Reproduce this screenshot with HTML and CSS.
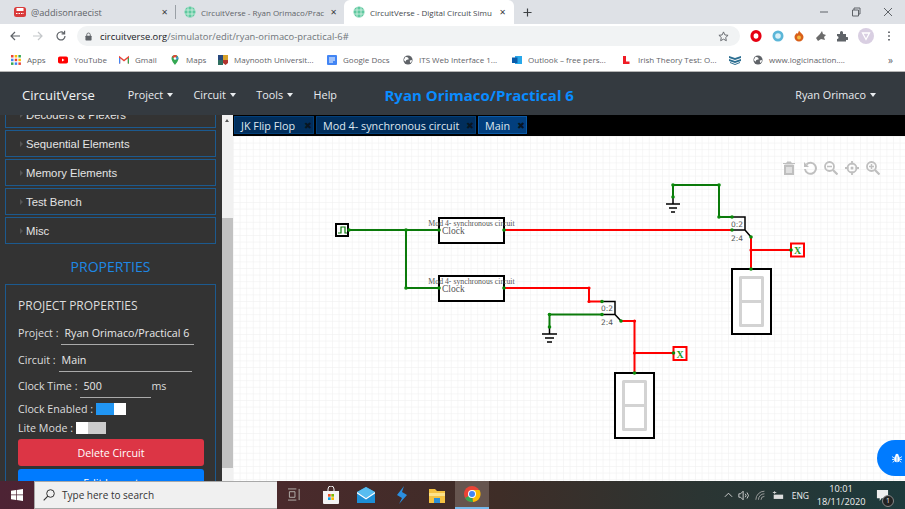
FILE: index.html
```html
<!DOCTYPE html>
<html lang="en">
<head>
    <meta charset="UTF-8">
    <meta name="viewport" content="width=device-width, initial-scale=1.0">
    <title>CircuitVerse - Digital Circuit Simulator</title>
    <link rel="stylesheet" href="styles.css">
</head>
<body>
    <svg class="defs" width="0" height="0">
        <symbol id="cv-globe" viewBox="0 0 12 12">
            <circle cx="6" cy="6" r="5.5" fill="#5fc9a0"/>
            <path d="M0.5 4h11M0.5 8h11M4 .8v10.4M8 .8v10.4" stroke="#d8f3e6" stroke-width=".8" fill="none"/>
        </symbol>
        <symbol id="earth" viewBox="0 0 12 12">
            <circle cx="6" cy="6" r="5.5" fill="#5f6368"/>
            <path d="M3 2l3 1 1 2-3 1-1 2-2-2zM8 7l2-1 1 1-2 3z" fill="#fff"/>
        </symbol>
    </svg>

    <!-- browser tabs -->
    <div class="tabstrip">
        <div class="tab tab-first">
            <svg class="favicon" viewBox="0 0 12 12"><rect x="0" y="1" width="12" height="10" rx="2.5" fill="#d93b3b"/><rect x="2.5" y="2" width="7" height="3" fill="#fff"/><path d="M2 7.5h8" stroke="#fff" stroke-dasharray="1.5 1"/></svg>
            <span class="tab-title">@addisonraecist</span>
            <span class="tab-x">✕</span>
        </div>
        <div class="tab tab-second">
            <svg class="favicon"><use href="#cv-globe"/></svg>
            <span class="tab-title">CircuitVerse - Ryan Orimaco/Prac</span>
            <span class="tab-x">✕</span>
        </div>
        <div class="tab tab-active">
            <svg class="favicon"><use href="#cv-globe"/></svg>
            <span class="tab-title">CircuitVerse - Digital Circuit Simu</span>
            <span class="tab-x">✕</span>
        </div>
        <svg class="new-tab" viewBox="0 0 10 10"><path d="M5 .5v9M.5 5h9" stroke="#3c4043" stroke-width="1.3"/></svg>
        <div class="win-controls">
            <svg viewBox="0 0 10 10"><path d="M1 5h8" stroke="#5f6368"/></svg>
            <svg viewBox="0 0 10 10"><path d="M1.5 3h6v6h-6zM3 3V1h6v6H7.5" stroke="#5f6368" fill="none"/></svg>
            <svg viewBox="0 0 10 10"><path d="M1 1l8 8M9 1l-8 8" stroke="#5f6368"/></svg>
        </div>
    </div>

    <!-- address bar -->
    <div class="toolbar">
        <svg class="nav-icon" viewBox="0 0 12 12"><path d="M11 6H2M6 2L2 6l4 4" stroke="#5f6368" stroke-width="1.2" fill="none"/></svg>
        <svg class="nav-icon" viewBox="0 0 12 12"><path d="M1 6h9M6 2l4 4-4 4" stroke="#c4c7ca" stroke-width="1.2" fill="none"/></svg>
        <svg class="nav-icon" viewBox="0 0 12 12"><path d="M10 6a4 4 0 1 1-1.2-2.9M9.6 .8v3h-3" stroke="#5f6368" stroke-width="1.2" fill="none"/></svg>
        <div class="omnibox">
            <svg class="lock" viewBox="0 0 8 10"><rect x="0.5" y="4" width="7" height="5.5" rx=".8" fill="#5f6368"/><path d="M2 4.5V3a2 2 0 0 1 4 0v1.5" stroke="#5f6368" fill="none"/></svg>
            <span class="url"><b>circuitverse.org</b>/simulator/edit/ryan-orimaco-practical-6#</span>
            <svg class="star" viewBox="0 0 12 12"><path d="M6 1l1.5 3.3 3.5.4-2.6 2.4.7 3.5L6 8.9l-3.1 1.7.7-3.5L1 4.7l3.5-.4z" stroke="#5f6368" fill="none"/></svg>
        </div>
        <div class="extensions">
            <svg viewBox="0 0 12 12"><ellipse cx="6" cy="6" rx="4" ry="4.4" fill="none" stroke="#e60012" stroke-width="3.2"/></svg>
            <svg viewBox="0 0 12 12"><circle cx="6" cy="6" r="5.5" fill="#5bb6d8"/><circle cx="6" cy="6" r="2.8" fill="#d9f0f7"/></svg>
            <svg viewBox="0 0 12 12"><path d="M6 .5c1 2 4.500 3.500 4.500 6.500a4.500 4.500 0 0 1-9 0C1.500 5 3 4 3.500 3 4 4 5 4 6 .5z" fill="#d9601a"/><circle cx="6" cy="7.500" r="2" fill="#f5b942"/></svg>
            <svg viewBox="0 0 12 12"><path d="M1 8l4-4 2-3 1 3 3 1-2 2 1 3-4-1-3 2z" fill="#6b6b6b"/></svg>
            <svg viewBox="0 0 12 12"><path d="M1 4h3V2.500a1.500 1.500 0 0 1 3 0V4h3v3h1a1.500 1.500 0 0 1 0 3h-1v1.500H1V9a1.500 1.500 0 0 0 0-3z" fill="#5f6368"/></svg>
            <svg class="avatar" viewBox="0 0 16 16"><circle cx="8" cy="8" r="8" fill="#d9cfe2"/><path d="M4.500 5h7L8 11.500z" fill="none" stroke="#fff" stroke-width="1.300"/></svg>
            <svg viewBox="0 0 12 12"><path d="M6 1.500v1.500M6 5.300v1.500M6 9v1.500" stroke="#5f6368" stroke-width="1.800"/></svg>
        </div>
    </div>

    <!-- bookmarks -->
    <div class="bookmarks">
        <a class="bm bm-apps"><svg viewBox="0 0 10 10"><path d="M0 0h2.500v2.500H0z" fill="#ea4335"/><path d="M3.700 0h2.500v2.500H3.700z" fill="#fbbc05"/><path d="M7.400 0h2.500v2.500H7.400z" fill="#34a853"/><path d="M0 3.700h2.500v2.500H0z" fill="#4285f4"/><path d="M3.700 3.700h2.500v2.500H3.700z" fill="#ea4335"/><path d="M7.400 3.700h2.500v2.500H7.400z" fill="#fbbc05"/><path d="M0 7.400h2.500v2.500H0z" fill="#34a853"/><path d="M3.700 7.400h2.500v2.500H3.700z" fill="#4285f4"/><path d="M7.400 7.400h2.500v2.500H7.400z" fill="#ea4335"/></svg>Apps</a>
        <a class="bm bm-yt"><svg viewBox="0 0 10 10"><rect y="1.500" width="10" height="7" rx="1.800" fill="#f00"/><path d="M4 3.500l2.500 1.500L4 6.500z" fill="#fff"/></svg>YouTube</a>
        <a class="bm bm-gmail"><svg viewBox="0 0 10 10"><path d="M.5 8.500V2L5 5.500 9.500 2v6.500" fill="none" stroke="#ea4335" stroke-width="1.400"/><path d="M.5 8.500V3" stroke="#4285f4" stroke-width="1.400"/><path d="M9.500 8.500V3" stroke="#34a853" stroke-width="1.400"/></svg>Gmail</a>
        <a class="bm bm-maps"><svg viewBox="0 0 10 10"><path d="M5 0a3.500 3.500 0 0 1 3.500 3.500C8.500 6 5 10 5 10S1.500 6 1.500 3.500A3.500 3.500 0 0 1 5 0z" fill="#34a853"/><path d="M2 2a3.500 3.500 0 0 1 5-1.500L5 3.500z" fill="#ea4335"/><path d="M8.500 3.500L6 5 7 1z" fill="#4285f4"/><circle cx="5" cy="3.500" r="1.300" fill="#fff"/></svg>Maps</a>
        <a class="bm bm-mu"><svg viewBox="0 0 10 10"><path d="M0 0h5v5H0z" fill="#27477d"/><path d="M5 0h5v5H5z" fill="#d7a12a"/><path d="M0 5h5v5H0z" fill="#2f6f60"/><path d="M5 5h5v3L7.500 10 5 8z" fill="#b2342e"/></svg>Maynooth Universit...</a>
        <a class="bm bm-docs"><svg viewBox="0 0 10 10"><rect x="0" width="10" height="10" rx="1" fill="#4285f4"/><path d="M2 3h6M2 5h6M2 7h4" stroke="#fff"/></svg>Google Docs</a>
        <a class="bm bm-its"><svg><use href="#earth"/></svg>ITS Web Interface 1...</a>
        <a class="bm bm-outlook"><svg viewBox="0 0 10 10"><rect x="3" y="1" width="7" height="8" fill="#28a8ea"/><rect y="2.500" width="5.500" height="5.500" fill="#0a5aa8"/></svg>Outlook – free pers...</a>
        <a class="bm bm-l"><svg viewBox="0 0 10 10"><path d="M0 1h3v5.500h3.500V9H0z" fill="#ef1c25"/></svg>Irish Theory Test: O...</a>
        <a class="bm bm-stack"><svg viewBox="0 0 12 10"><path d="M0 1l6 2 6-2v2L6 5 0 3zM0 4l6 2 6-2v2L6 8 0 6zM1 7l5 2 5-2v1l-5 2-5-2z" fill="#2c6e91"/></svg></a>
        <a class="bm bm-www"><svg><use href="#earth"/></svg>www.logicinaction....</a>
        <span class="bm-more">»</span>
    </div>

    <!-- simulator navbar -->
    <nav class="navbar">
        <span class="brand">CircuitVerse</span>
        <span class="nav-link">Project<i class="caret"></i></span>
        <span class="nav-link">Circuit<i class="caret"></i></span>
        <span class="nav-link">Tools<i class="caret"></i></span>
        <span class="nav-link">Help</span>
        <span class="project-title">Ryan Orimaco/Practical 6</span>
        <span class="nav-link nav-user">Ryan Orimaco<i class="caret"></i></span>
    </nav>

    <div class="workspace">
        <aside class="sidebar">
            <div class="sidebar-inner">
                <div class="acc-item"><i class="acc-arrow"></i>Decoders &amp; Plexers</div>
                <div class="acc-item"><i class="acc-arrow"></i>Sequential Elements</div>
                <div class="acc-item"><i class="acc-arrow"></i>Memory Elements</div>
                <div class="acc-item"><i class="acc-arrow"></i>Test Bench</div>
                <div class="acc-item"><i class="acc-arrow"></i>Misc</div>
                <h3 class="props-heading">PROPERTIES</h3>
                <div class="props-box">
                    <div class="props-title">PROJECT PROPERTIES</div>
                    <div class="prop-row">Project :<span class="prop-input prop-long">Ryan Orimaco/Practical 6</span></div>
                    <div class="prop-row">Circuit :<span class="prop-input prop-long">Main</span></div>
                    <div class="prop-row">Clock Time :<span class="prop-input prop-clock">500</span>ms</div>
                    <div class="switch-row">Clock Enabled :<span class="switch switch-on"><i></i></span></div>
                    <div class="switch-row switch-row-lite">Lite Mode :<span class="switch switch-off"><i></i></span></div>
                    <button class="btn btn-danger">Delete Circuit</button>
                    <button class="btn btn-primary">Edit Layout</button>
                </div>
            </div>
        </aside>
        <div class="scrollbar">
            <i class="scroll-up"></i>
            <i class="scroll-thumb"></i>
        </div>
        <main class="stage">
            <div class="circuit-tabs">
                <div class="ctab">JK Flip Flop<span class="ctab-x">✖</span></div>
                <div class="ctab">Mod 4- synchronous circuit<span class="ctab-x">✖</span></div>
                <div class="ctab ctab-current">Main<span class="ctab-x">✖</span></div>
            </div>
            <div class="canvas">
                <svg class="circuit" viewBox="233 136 672 345" width="672" height="345">
                    <defs>
                        <pattern id="grid" x="233" y="136" width="6.6" height="6.6" patternUnits="userSpaceOnUse">
                            <path d="M6.600 0H0V6.600" fill="none" stroke="#eee" stroke-width="1"/>
                        </pattern>
                    </defs>
                    <rect x="233" y="136" width="672" height="345" fill="url(#grid)"/>

                    <!-- green wires -->
                    <path class="wire wire-low" d="M349 230H439M406 230V288H439"/>
                    <path class="wire wire-low" d="M673 197V185H719V217H732"/>
                    <path class="wire wire-low" d="M602 314.500H549.500V327"/>

                    <!-- red wires -->
                    <path class="wire wire-high" d="M504 230H732"/>
                    <path class="wire wire-high" d="M504 288H589V301.500H602"/>
                    <path class="wire wire-high" d="M751 237V269M751 250H790"/>
                    <path class="wire wire-high" d="M621 321H634.500V373M634.500 353H673"/>

                    <!-- clock -->
                    <rect class="block" x="336" y="224" width="12" height="12"/>
                    <path class="clock-wave" d="M338 233H341V227H345V233H347"/>

                    <!-- subcircuits -->
                    <rect class="block block-fill" x="439" y="218" width="65" height="25"/>
                    <text class="sub-title" x="471.500" y="226" text-anchor="middle">Mod 4- synchronous circuit</text>
                    <text class="sub-pin" x="442" y="233.500">Clock</text>
                    <rect class="block block-fill" x="439" y="276" width="65" height="25"/>
                    <text class="sub-title" x="471.500" y="284" text-anchor="middle">Mod 4- synchronous circuit</text>
                    <text class="sub-pin" x="442" y="291.500">Clock</text>

                    <!-- splitters -->
                    <path class="splitter" d="M732 217H745V230H732M745 230L751 237"/>
                    <text class="split-label" x="731" y="227">0:2</text>
                    <text class="split-label" x="731" y="240.500">2:4</text>
                    <path class="splitter" d="M602 301.500H615V314.500H602M615 314.500L621 321"/>
                    <text class="split-label" x="601" y="311">0:2</text>
                    <text class="split-label" x="601" y="324.500">2:4</text>

                    <!-- grounds -->
                    <path class="splitter" d="M673 197V204M666 204H680M669 208H677M671 212H675"/>
                    <path class="splitter" d="M549.500 327V334M542 334H557M545 338H554M547 342H552"/>

                    <!-- outputs -->
                    <rect class="out-box" x="791" y="243.500" width="13" height="13"/>
                    <text class="out-text" x="797.500" y="254" text-anchor="middle">X</text>
                    <rect class="out-box" x="673.500" y="347" width="13" height="13"/>
                    <text class="out-text" x="680" y="357.500" text-anchor="middle">X</text>

                    <!-- seven segment displays -->
                    <rect class="block block-fill" x="732" y="269" width="39" height="65"/>
                    <path class="segments" d="M740.500 277.500H762.500V325.500H740.500ZM740.500 301.500H762.500"/>
                    <rect class="block block-fill" x="615" y="373" width="39" height="65"/>
                    <path class="segments" d="M623.500 381.500H645.500V429.500H623.500ZM623.500 405.500H645.500"/>

                    <!-- nodes -->
                    <g class="nodes-low">
                        <circle cx="349" cy="230" r="1.800"/><circle cx="406" cy="230" r="1.800"/><circle cx="406" cy="288" r="1.800"/>
                        <circle cx="439" cy="230" r="1.800"/><circle cx="439" cy="288" r="1.800"/><circle cx="504" cy="230" r="1.800"/>
                        <circle cx="504" cy="288" r="1.800"/><circle cx="673" cy="185" r="1.800"/><circle cx="673" cy="197" r="1.800"/>
                        <circle cx="719" cy="185" r="1.800"/><circle cx="719" cy="217" r="1.800"/><circle cx="732" cy="217" r="1.800"/>
                        <circle cx="732" cy="230" r="1.800"/><circle cx="751" cy="237" r="1.800"/><circle cx="751" cy="269" r="1.800"/>
                        <circle cx="791" cy="250" r="1.800"/><circle cx="602" cy="301.500" r="1.800"/><circle cx="602" cy="314.500" r="1.800"/>
                        <circle cx="549.500" cy="314.500" r="1.800"/><circle cx="549.500" cy="327" r="1.800"/><circle cx="621" cy="321" r="1.800"/>
                        <circle cx="634.500" cy="373" r="1.800"/><circle cx="673.500" cy="353" r="1.800"/>
                    </g>
                    <g class="nodes-high">
                        <circle cx="751" cy="250" r="1.600"/><circle cx="589" cy="288" r="1.600"/><circle cx="589" cy="301.500" r="1.600"/>
                        <circle cx="634.500" cy="321" r="1.600"/><circle cx="634.500" cy="353" r="1.600"/>
                    </g>
                </svg>

                <div class="canvas-tools">
                    <svg viewBox="0 0 14 14"><path d="M1 2.500h12M5 2.500V1h4v1.500M2.500 4h9v10h-9z" fill="#bfbfbf" stroke="#bfbfbf"/><path d="M5 6v6M7 6v6M9 6v6" stroke="#fff"/></svg>
                    <svg viewBox="0 0 14 14"><path d="M3.500 3.500A5.500 5.500 0 1 1 2 8" fill="none" stroke="#bfbfbf" stroke-width="2"/><path d="M1 1v5h5z" fill="#bfbfbf"/></svg>
                    <svg viewBox="0 0 14 14"><circle cx="5.500" cy="5.500" r="4.500" fill="none" stroke="#bfbfbf" stroke-width="1.800"/><path d="M9 9l4.500 4.500" stroke="#bfbfbf" stroke-width="2.200"/><path d="M3 5.500h5" stroke="#bfbfbf" stroke-width="1.500"/></svg>
                    <svg viewBox="0 0 14 14"><circle cx="7" cy="7" r="4.500" fill="none" stroke="#bfbfbf" stroke-width="1.800"/><circle cx="7" cy="7" r="1.500" fill="#bfbfbf"/><path d="M7 0v3.500M7 10.500V14M0 7h3.500M10.500 7H14" stroke="#bfbfbf" stroke-width="1.800"/></svg>
                    <svg viewBox="0 0 14 14"><circle cx="5.500" cy="5.500" r="4.500" fill="none" stroke="#bfbfbf" stroke-width="1.800"/><path d="M9 9l4.500 4.500" stroke="#bfbfbf" stroke-width="2.200"/><path d="M3 5.500h5M5.500 3v5" stroke="#bfbfbf" stroke-width="1.500"/></svg>
                </div>
                <div class="report-bug">
                    <svg viewBox="0 0 14 14"><ellipse cx="7" cy="8.500" rx="4" ry="4.500" fill="#fff"/><circle cx="7" cy="3.500" r="2.300" fill="#fff"/><path d="M0 5l3 2M14 5l-3 2M0 9h3M14 9h-3M1 13l2.500-2M13 13l-2.500-2" stroke="#fff" stroke-width="1.200"/><path d="M7 5v8" stroke="#007bff" stroke-width=".8"/></svg>
                </div>
            </div>
        </main>
    </div>

    <!-- windows taskbar -->
    <footer class="taskbar">
        <div class="start">
            <svg viewBox="0 0 12 12"><path d="M0 1.800l5-.7v4.500H0zM5.700 1l6.300-1v5.600H5.700zM0 6.300h5v4.600l-5-.7zM5.700 6.300H12V12l-6.300-1z" fill="#fff"/></svg>
        </div>
        <div class="search">
            <svg viewBox="0 0 12 12"><circle cx="7.500" cy="4.500" r="3.800" fill="none" stroke="#333"/><path d="M4.800 7.200L.7 11.300" stroke="#333" stroke-width="1.100"/></svg>
            <span>Type here to search</span>
        </div>
        <svg class="task-view" viewBox="0 0 14 14"><path d="M0 1h9M0 13h9M1.500 4h6v6h-6zM12 1v12" stroke="#b8b4b0" fill="none"/></svg>
        <div class="pinned">
            <span class="pin"><svg viewBox="0 0 18 18"><path d="M1 5h16v12a1 1 0 0 1-1 1H2a1 1 0 0 1-1-1z" fill="#f4f4f4"/><path d="M6 5V3a3 3 0 0 1 6 0v2" stroke="#f4f4f4" fill="none"/><path d="M6 8h2.700v2.700H6z" fill="#f25022"/><path d="M9.300 8H12v2.700H9.300z" fill="#7fba00"/><path d="M6 11.300h2.700V14H6z" fill="#00a4ef"/><path d="M9.300 11.300H12V14H9.300z" fill="#ffb900"/></svg></span>
            <span class="pin"><svg viewBox="0 0 18 18"><path d="M0 6l9-5 9 5v11H0z" fill="#1d8fd6"/><path d="M0 6l9 6 9-6-9-5z" fill="#58bdf0"/><path d="M0 6l9 6 9-6v1.500l-9 6-9-6z" fill="#fff"/></svg></span>
            <span class="pin"><svg viewBox="0 0 18 18"><path d="M11 0L4 9l5 3-3 6 8-9-5-3z" fill="#2b8fe0"/></svg></span>
            <span class="pin"><svg viewBox="0 0 18 18"><path d="M1 3h6l2 2h8v12H1z" fill="#f5c242"/><path d="M1 7h16v3H1z" fill="#fde28a"/><path d="M6 12h6v5H6z" fill="#2a8fd8"/></svg></span>
            <span class="pin pin-active"><svg viewBox="0 0 18 18"><circle cx="9" cy="9" r="8" fill="#ea4335"/><path d="M9 9L2 13a8 8 0 0 0 8 4z" fill="#34a853"/><path d="M9 5h7.500a8 8 0 0 1-6.500 12z" fill="#fbbc05"/><circle cx="9" cy="9" r="4" fill="#fff"/><circle cx="9" cy="9" r="3" fill="#4285f4"/></svg></span>
        </div>
        <div class="tray">
            <svg class="tray-caret" viewBox="0 0 10 6"><path d="M1 5l4-4 4 4" stroke="#ddd" fill="none"/></svg>
            <svg class="tray-icon" viewBox="0 0 14 12"><path d="M1 4h2l3-3v10L3 8H1zM8.500 4a3 3 0 0 1 0 4M10.500 2.500a5 5 0 0 1 0 7" stroke="#ddd" fill="none"/></svg>
            <svg class="tray-icon" viewBox="0 0 14 12"><path d="M1 11a10 10 0 0 1 10-10M4 11a7 7 0 0 1 7-7M7 11a4 4 0 0 1 4-4" stroke="#aaa" fill="none"/></svg>
            <svg class="tray-icon" viewBox="0 0 14 12"><path d="M2 5h11v5H2z" fill="#ddd"/><path d="M3 1v3M1 2.500h4" stroke="#ddd"/></svg>
            <span class="tray-lang">ENG</span>
            <div class="tray-clock"><span>10:01</span><span>18/11/2020</span></div>
            <div class="tray-notify">
                <svg viewBox="0 0 14 14"><path d="M1 1h12v9H6l-2 3v-3H1z" fill="#eee"/></svg>
                <span class="notify-count">1</span>
            </div>
        </div>
    </footer>
</body>
</html>
```

FILE: styles.css
```css
* {
    box-sizing: border-box;
}
html, body {
    height: 100%;
}
body {
    margin: 0;
    width: 905px;
    height: 509px;
    overflow: hidden;
    display: flex;
    flex-direction: column;
    font-family: "Open Sans", "Noto Sans", sans-serif;
    background-color: #fff;
}
.defs {
    position: absolute;
}

/* browser tabs */
.tabstrip {
    height: 24px;
    flex: none;
    display: flex;
    align-items: center;
    background-color: #dee1e6;
}
.tab {
    height: 24px;
    display: flex;
    align-items: center;
    font-size: 8px;
    color: #5f6368;
}
.tab-first {
    width: 175px;
    padding: 0 7px 0 14px;
    font-size: 9.2px;
}
.tab-second {
    width: 169px;
    padding: 0 7px 0 9px;
    position: relative;
}
.tab-second::before {
    content: "";
    position: absolute;
    left: 0;
    top: 5px;
    height: 14px;
    border-left: 1px solid #9aa0a6;
}
.tab-active {
    width: 170px;
    padding: 0 8px 0 9px;
    background-color: #fff;
    border-radius: 6px 6px 0 0;
    color: #45494d;
}
.favicon {
    width: 12px;
    height: 12px;
    flex: none;
    margin-right: 5px;
}
.tab-title {
    flex: 1;
    white-space: nowrap;
}
.tab-x {
    flex: none;
    font-size: 8px;
    color: #3c4043;
    font-family: "DejaVu Sans", sans-serif;
}
.new-tab {
    width: 9px;
    height: 9px;
    margin-left: 9px;
}
.win-controls {
    margin-left: auto;
    width: 74px;
    margin-right: 12px;
    display: flex;
    justify-content: space-between;
}
.win-controls svg {
    width: 10px;
    height: 10px;
}

/* address bar */
.toolbar {
    height: 24px;
    flex: none;
    display: flex;
    align-items: center;
    padding-left: 9px;
    background-color: #fff;
}
.nav-icon {
    width: 12px;
    height: 12px;
    margin-right: 11px;
}
.omnibox {
    width: 663px;
    height: 20px;
    margin-left: -1px;
    padding: 0 11px 0 8px;
    border-radius: 10px;
    background-color: #f1f3f4;
    display: flex;
    align-items: center;
}
.lock {
    width: 7px;
    height: 9px;
    margin-right: 8px;
}
.url {
    font-size: 9.4px;
    color: #70757a;
    flex: 1;
}
.url b {
    font-weight: 400;
    color: #202124;
}
.star {
    width: 11px;
    height: 11px;
}
.extensions {
    flex: 1;
    display: flex;
    align-items: center;
    justify-content: space-between;
    padding: 0 10px;
}
.extensions svg {
    width: 12px;
    height: 12px;
}
.extensions .avatar {
    width: 16px;
    height: 16px;
}

/* bookmarks */
.bookmarks {
    height: 24px;
    flex: none;
    display: flex;
    align-items: center;
    background-color: #fff;
    border-bottom: 1px solid #b5b5b5;
    font-size: 8px;
    color: #5f6368;
}
.bm {
    display: flex;
    align-items: center;
    white-space: nowrap;
}
.bm svg {
    width: 10px;
    height: 10px;
    margin-right: 6px;
    flex: none;
}
.bm-apps { margin-left: 11px; width: 47px; }
.bm-yt { width: 61px; }
.bm-gmail { width: 51px; }
.bm-maps { width: 48px; }
.bm-mu { width: 109px; }
.bm-docs { width: 76px; }
.bm-its { width: 109px; }
.bm-outlook { width: 111px; }
.bm-l { width: 106px; }
.bm-l svg { margin-right: 5px; }
.bm-stack { width: 24px; }
.bm-stack svg { width: 12px; }
.bm-www { width: 135px; }
.bm-more {
    font-size: 10px;
}

/* simulator navbar */
.navbar {
    height: 43px;
    flex: none;
    display: flex;
    align-items: center;
    padding: 2px 0 0 22px;
    background-color: #343a40;
    color: #e9ecef;
}
.brand {
    font-size: 13px;
    color: #f1f3f5;
    margin-right: 33px;
}
.nav-link {
    font-size: 10.8px;
    margin-right: 20.5px;
    white-space: nowrap;
}
.caret {
    display: inline-block;
    margin-left: 4px;
    vertical-align: 2px;
    border-top: 4px solid #e9ecef;
    border-left: 3px solid transparent;
    border-right: 3px solid transparent;
}
.project-title {
    margin-left: 27px;
    font-size: 15px;
    font-weight: 700;
    color: #0a8cff;
    white-space: nowrap;
}
.nav-user {
    margin-left: auto;
    margin-right: 29px;
}

/* sidebar */
.workspace {
    flex: 1;
    min-height: 0;
    display: flex;
}
.sidebar {
    width: 222px;
    flex: none;
    overflow: hidden;
    background-color: #333;
    color: #ddd;
}
.sidebar-inner {
    margin-top: -14px;
    padding: 0 6px 0 5px;
}
.acc-item {
    height: 27px;
    margin-bottom: 2px;
    display: flex;
    align-items: center;
    padding-left: 14px;
    border: 1px solid #1c5a8f;
    font-family: "Liberation Sans", Arial, sans-serif;
    font-size: 11.3px;
    color: #e4e4e4;
}
.acc-arrow {
    width: 0;
    height: 0;
    margin-right: 3px;
    border-left: 3px solid #555;
    border-top: 3px solid transparent;
    border-bottom: 3px solid transparent;
}
.props-heading {
    margin: 13px 0 8px;
    text-align: center;
    font-size: 14px;
    line-height: 19px;
    font-weight: 400;
    color: #1e88e5;
}
.props-box {
    padding: 13px 12px 0 12px;
    border: 1px solid #1c5a8f;
    border-bottom: 0;
    font-size: 10.7px;
    color: #ddd;
}
.props-title {
    font-size: 12px;
    line-height: 16px;
    margin-bottom: 11px;
}
.prop-row {
    height: 26.5px;
    display: flex;
    align-items: flex-start;
    line-height: 16px;
    white-space: nowrap;
}
.prop-input {
    height: 20px;
    margin-left: 3px;
    padding-left: 3px;
    border-bottom: 1.5px solid #aaa;
    color: #e8e8e8;
}
.prop-long {
    width: 133px;
}
.prop-clock {
    width: 71px;
}
.switch-row {
    height: 20px;
    display: flex;
    align-items: center;
    line-height: 16px;
    margin-top: -5.5px;
}
.switch-row-lite {
    margin-top: -1px;
}
.switch {
    width: 30px;
    height: 12px;
    margin-left: 3px;
    display: flex;
    background-color: #ccc;
}
.switch i {
    width: 12px;
    background-color: #fff;
}
.switch-on {
    justify-content: flex-end;
    background-color: #2196f3;
}
.btn {
    display: block;
    width: 186px;
    height: 27px;
    padding: 0;
    border: 0;
    border-radius: 3px;
    color: #fff;
    font-family: inherit;
    font-size: 10.7px;
}
.btn-danger {
    margin-top: 1px;
    margin-bottom: 3px;
    background-color: #dc3545;
}
.btn-primary {
    background-color: #007bff;
}
.scrollbar {
    width: 11px;
    flex: none;
    background-color: #f1f1f1;
    position: relative;
}
.scroll-up {
    position: absolute;
    left: 3px;
    top: 4px;
    border-bottom: 3px solid #555;
    border-left: 2.5px solid transparent;
    border-right: 2.5px solid transparent;
}
.scroll-thumb {
    position: absolute;
    left: 0;
    top: 103px;
    width: 100%;
    height: 250px;
    background-color: #c1c1c1;
}

/* circuit area */
.stage {
    flex: 1;
    min-width: 0;
    display: flex;
    flex-direction: column;
}
.circuit-tabs {
    height: 21px;
    flex: none;
    display: flex;
    gap: 2px;
    padding: 1px 0 2px 1px;
    background-color: #000;
}
.ctab {
    display: flex;
    align-items: center;
    justify-content: space-between;
    padding: 0 2px 0 7px;
    width: 80px;
    font-size: 10.8px;
    color: #dfe7ef;
    white-space: nowrap;
    background-color: #012e5c;
    box-shadow: inset 0 0 0 1px #023f7a;
}
.ctab:nth-child(2) {
    width: 160px;
}
.ctab-current {
    width: 49px;
    background-color: #023f7e;
    box-shadow: inset 0 0 0 1px #0a5aa8;
}
.ctab-x {
    font-family: "DejaVu Sans", sans-serif;
    font-size: 9.5px;
    color: #081522;
}
.canvas {
    flex: 1;
    min-height: 0;
    position: relative;
    overflow: hidden;
    background-color: #fff;
}
.circuit {
    display: block;
}
.wire {
    fill: none;
    stroke-width: 2;
}
.wire-low {
    stroke: #0b7a0b;
}
.wire-high {
    stroke: #ff0000;
}
.block {
    fill: none;
    stroke: #000;
    stroke-width: 2;
}
.block-fill {
    fill: #fff;
}
.clock-wave {
    fill: none;
    stroke: #0b7a0b;
    stroke-width: 1.2;
}
.sub-title {
    font-family: "Liberation Serif", serif;
    font-size: 7.8px;
    fill: #555;
}
.sub-pin {
    font-family: "Liberation Serif", serif;
    font-size: 9.5px;
    fill: #555;
}
.splitter {
    fill: none;
    stroke: #000;
    stroke-width: 1.5;
}
.split-label {
    font-family: "DejaVu Sans", sans-serif;
    font-size: 7.5px;
    fill: #555;
}
.out-box {
    fill: #fff;
    stroke: #ff0000;
    stroke-width: 2;
}
.out-text {
    font-family: "Liberation Serif", serif;
    font-size: 10px;
    font-weight: 700;
    fill: #1f9a1f;
}
.segments {
    fill: none;
    stroke: #d3d3d3;
    stroke-width: 3;
    stroke-linejoin: round;
}
.nodes-low {
    fill: #0b8a0b;
}
.nodes-high {
    fill: #ff0000;
}
.canvas-tools {
    position: absolute;
    top: 25px;
    left: 549px;
    display: flex;
    gap: 7px;
}
.canvas-tools svg {
    width: 14px;
    height: 14px;
}
.report-bug {
    position: absolute;
    left: 644px;
    top: 304px;
    width: 50px;
    height: 36px;
    border-radius: 18px 0 0 18px;
    background-color: #007bff;
    padding: 13px 0 0 15px;
}
.report-bug svg {
    display: block;
    width: 10px;
    height: 10px;
}

/* windows taskbar */
.taskbar {
    height: 28px;
    flex: none;
    display: flex;
    align-items: stretch;
    color: #eee;
    background: linear-gradient(90deg, #4d2334 0, #4a2a2c 280px, #3e2d27 500px, #2b3533 700px, #1d3a3c 905px);
}
.start {
    width: 34px;
    display: flex;
    align-items: center;
    justify-content: center;
}
.start svg {
    width: 12px;
    height: 12px;
}
.search {
    width: 243px;
    display: flex;
    align-items: center;
    padding-left: 8px;
    font-size: 10px;
    color: #333;
    background-color: #f0f0f0;
    border: 1px solid #a8a8a8;
    border-right: 0;
}
.search svg {
    width: 12px;
    height: 12px;
    margin-right: 7px;
}
.task-view {
    width: 13px;
    height: 13px;
    margin: 7px 0 0 11px;
}
.pinned {
    display: flex;
    margin-left: 12px;
}
.pin {
    width: 35.5px;
    display: flex;
    align-items: center;
    justify-content: center;
}
.pin svg {
    width: 18px;
    height: 18px;
}
.pin-active {
    width: 34px;
    background-color: #66554f;
    border-bottom: 2px solid #76b9ed;
}
.tray {
    margin-left: auto;
    display: flex;
    align-items: center;
}
.tray-caret {
    width: 9px;
    height: 6px;
    margin-right: 5px;
}
.tray-icon {
    width: 12px;
    height: 11px;
    margin-right: 5px;
}
.tray-lang {
    font-size: 8.5px;
    margin: 0 9px 0 3px;
}
.tray-clock {
    width: 46px;
    display: flex;
    flex-direction: column;
    align-items: center;
    font-size: 9.2px;
    line-height: 13px;
}
.tray-notify {
    width: 41px;
    padding-left: 12px;
    position: relative;
}
.tray-notify svg {
    display: block;
    width: 13px;
    height: 13px;
}
.notify-count {
    position: absolute;
    left: 18px;
    top: 6px;
    width: 12px;
    height: 12px;
    border-radius: 50%;
    border: 1px solid #888;
    background-color: #222;
    font-size: 7px;
    line-height: 10px;
    text-align: center;
}
```
